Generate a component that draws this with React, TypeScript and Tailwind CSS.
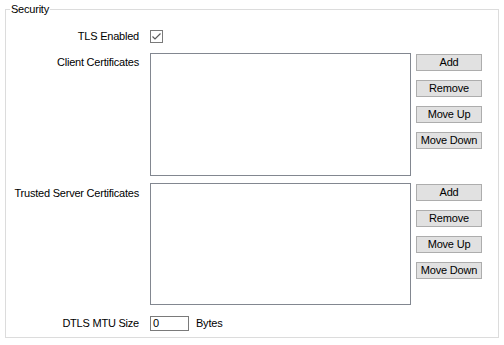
import React from "react";

function Btn({ children }: { children: React.ReactNode }) {
  return (
    <button className="h-[17px] w-[66px] border border-[#adadad] bg-[#e1e1e1] text-[11px] leading-[15px] tracking-[-0.2px] text-black">
      {children}
    </button>
  );
}

function CertList({ h }: { h: string }) {
  return (
    <div className="flex">
      <div className={`w-[261px] border border-[#828790] bg-white ${h}`} />
      <div className="ml-[5px] mt-[1px] flex flex-col gap-[9px]">
        <Btn>Add</Btn>
        <Btn>Remove</Btn>
        <Btn>Move Up</Btn>
        <Btn>Move Down</Btn>
      </div>
    </div>
  );
}

export default function App() {
  return (
    <div className="h-[345px] w-[504px] bg-white pt-[3px] text-[11px] leading-[13px] tracking-[-0.22px] text-black [font-family:'Liberation_Sans',Arial,sans-serif]">
      <fieldset className="ml-[5px] w-[494px] border border-[#dcdcdc] pb-[6px]">
        <legend className="ml-[4px] px-[1px] leading-[13px]">Security</legend>

        <div className="grid grid-cols-[133px_1fr] gap-x-[11px]">
          {/* TLS */}
          <div className="mt-[14px] flex h-[13px] items-center justify-end">TLS Enabled</div>
          <div className="mt-[14px]">
            <div className="flex h-[13px] w-[13px] items-center justify-center border border-[#7a7a7a] bg-white">
              <svg width="11" height="11" viewBox="0 0 11 11">
                <path d="M1.5 5.5 L4 8 L9.5 2.5" fill="none" stroke="#5a5a5a" strokeWidth="1.2" />
              </svg>
            </div>
          </div>

          {/* client certs */}
          <div className="mt-[10px] pt-[3px] text-right">Client Certificates</div>
          <div className="mt-[10px]">
            <CertList h="h-[123px]" />
          </div>

          {/* trusted server certs */}
          <div className="mt-[7px] pt-[4px] text-right">Trusted Server Certificates</div>
          <div className="mt-[7px]">
            <CertList h="h-[122px]" />
          </div>

          {/* DTLS */}
          <div className="mt-[11px] flex h-[15px] items-center justify-end">DTLS MTU Size</div>
          <div className="mt-[11px] flex h-[15px] items-center">
            <div className="flex h-[15px] w-[39px] items-center border border-[#7a7a7a] bg-white pl-[2px]">0</div>
            <span className="ml-[7px]">Bytes</span>
          </div>
        </div>
      </fieldset>
    </div>
  );
}
